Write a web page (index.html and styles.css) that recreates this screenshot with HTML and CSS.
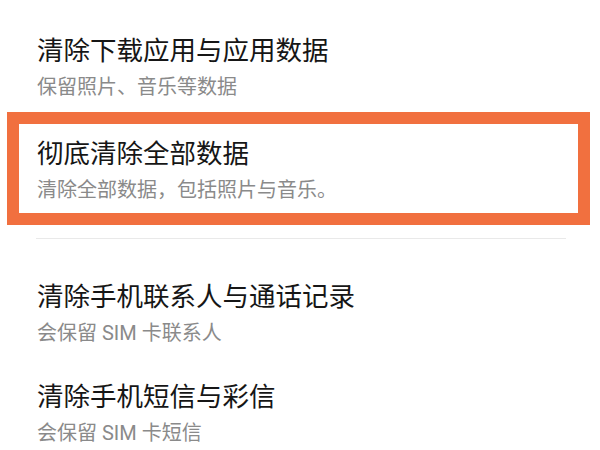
FILE: index.html
```html
<!DOCTYPE html>
<html>
<head>
    <meta charset="utf-8">
    <title>清除数据</title>
    <link rel="stylesheet" href="styles.css">
</head>
<body>
    <div class="list">
        <div class="item">
            <div class="title">清除下载应用与应用数据</div>
            <div class="sub">保留照片、音乐等数据</div>
        </div>
        <div class="item picked">
            <div class="title">彻底清除全部数据</div>
            <div class="sub">清除全部数据，包括照片与音乐。</div>
        </div>
        <div class="divider"></div>
        <div class="item first-after">
            <div class="title">清除手机联系人与通话记录</div>
            <div class="sub">会保留 SIM 卡联系人</div>
        </div>
        <div class="item last">
            <div class="title">清除手机短信与彩信</div>
            <div class="sub">会保留 SIM 卡短信</div>
        </div>
    </div>
</body>
</html>
```

FILE: styles.css
```css
* {
    box-sizing: border-box;
}

body {
    margin: 0;
    background-color: #ffffff;
    font-family: Roboto, "Noto Sans CJK SC", sans-serif;
}

.list {
    width: 600px;
    padding-top: 33px;
}

.item {
    padding: 0 37px;
}

.title {
    font-size: 26.5px;
    line-height: 36px;
    color: #161616;
}

.sub {
    font-size: 20px;
    line-height: 36px;
    color: #8a8a8a;
}

.picked {
    margin: 7px 10px 0 7px;
    padding: 12px 18px 5px 18px;
    border: 12px solid #f1703f;
}

.divider {
    height: 1px;
    margin: 13px 34px 0 36px;
    background-color: #e9e9e9;
}

.first-after {
    margin-top: 40px;
}

.last {
    margin-top: 28px;
}
```
